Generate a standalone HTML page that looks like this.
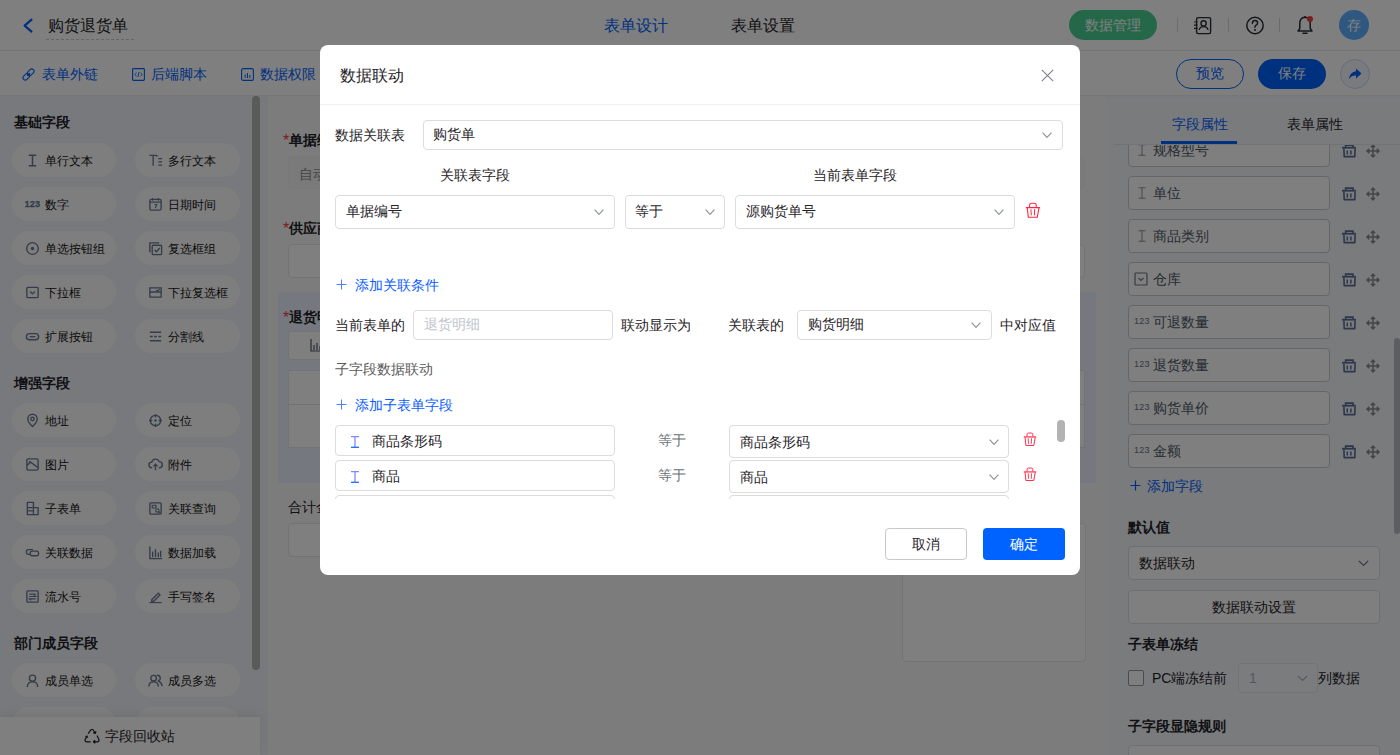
<!DOCTYPE html>
<html><head><meta charset="utf-8">
<style>
*{margin:0;padding:0;box-sizing:border-box}
html,body{width:1400px;height:755px;overflow:hidden;font-family:"Liberation Sans",sans-serif;color:#1f2329;background:#f5f5f5}
.a{position:absolute}
.t{position:absolute;white-space:nowrap;line-height:1}
#hdr{z-index:2;left:0;top:0;width:1400px;height:51px;background:#fff;border-bottom:1px solid #e8e8e8}
#tb{left:0;top:51px;width:1400px;height:44px;background:#fff;box-shadow:0 1px 3px rgba(0,0,0,0.04);z-index:1}
#lp{left:0;top:96px;width:268px;height:659px;background:#f1f3f8}
.sec{font-size:14px;font-weight:bold;color:#1f2329}
.pill{position:absolute;height:34px;border-radius:17px;background:#fcfcfd;font-size:12px;color:#141414}
.pill .ic{position:absolute;top:9.5px;left:12.5px;width:15px;height:15px}
.pill span{position:absolute;left:33px;top:12px;line-height:12px;white-space:nowrap}
#cv{left:268px;top:96px;width:838px;height:659px;background:#f9f9f9}
#rp{left:1106px;top:96px;width:294px;height:659px;background:#f4f6fb}
#mask{z-index:5;left:0;top:0;width:1400px;height:755px;background:rgba(0,0,0,.5)}
#dlg{z-index:6;left:320px;top:45px;width:760px;height:530px;background:#fff;border-radius:8px;overflow:hidden}
.inp{position:absolute;border:1px solid #dcdfe6;border-radius:4px;background:#fff;font-size:14px;color:#1f2329}
.inp span{position:absolute;top:50%;transform:translateY(-50%);line-height:1;white-space:nowrap}
.chev{position:absolute;width:10px;height:6px}
.lbl{font-size:14px;color:#1f2329}
.blue{color:#0062ff}
</style></head><body>
<!-- header -->
<div id="hdr" class="a">
  <svg class="a" style="left:22px;top:17.5px" width="12" height="16" viewBox="0 0 12 16"><path d="M9.5 1.6 L2.6 7.6 L9.5 13.6" fill="none" stroke="#0062ff" stroke-width="2.2" stroke-linecap="round" stroke-linejoin="round"/></svg>
  <div class="t" style="left:48px;top:17.5px;font-size:16px;color:#1f2329">购货退货单</div>
  <div class="a" style="left:46px;top:39px;width:88px;height:0;border-top:1px dashed #c9cdd4"></div>
  <div class="t" style="left:603.5px;top:18px;font-size:16px;color:#0062ff">表单设计</div>
  <div class="t" style="left:730.5px;top:18px;font-size:16px;color:#1f2329">表单设置</div>
  <div class="a" style="left:1069px;top:10px;width:88px;height:30px;border-radius:15px;background:#48d092"></div>
  <div class="t" style="left:1085px;top:18px;font-size:14px;color:#fff">数据管理</div>
  <div class="a" style="left:1177px;top:18px;width:1px;height:14px;background:#d9d9d9"></div>
  <div class="a" style="left:1228px;top:18px;width:1px;height:14px;background:#d9d9d9"></div>
  <div class="a" style="left:1279px;top:18px;width:1px;height:14px;background:#d9d9d9"></div>
  <svg class="a" style="left:1193px;top:16px" width="20" height="19" viewBox="0 0 20 19"><rect x="3.6" y="1.6" width="14" height="16" rx="1.5" fill="none" stroke="#2b2f36" stroke-width="1.4"/><circle cx="10.6" cy="7.4" r="2.6" fill="none" stroke="#2b2f36" stroke-width="1.4"/><path d="M6.2 14 Q6.8 10.6 10.6 10.6 Q14.4 10.6 15 14" fill="none" stroke="#2b2f36" stroke-width="1.4"/><path d="M1 6h3.5M1 9.1h3.5M1 12.3h3.5" stroke="#2b2f36" stroke-width="1.2"/></svg>
  <svg class="a" style="left:1245px;top:16px" width="20" height="19" viewBox="0 0 20 19"><circle cx="10" cy="9.5" r="8.2" fill="none" stroke="#2b2f36" stroke-width="1.5"/><path d="M7.4 7.3 Q7.4 4.6 10 4.6 Q12.6 4.6 12.6 7 Q12.6 8.6 10.8 9.4 Q10 9.8 10 11.2" fill="none" stroke="#2b2f36" stroke-width="1.5" stroke-linecap="round"/><circle cx="10" cy="14" r="1" fill="#2b2f36"/></svg>
  <svg class="a" style="left:1296px;top:15px" width="18" height="20" viewBox="0 0 18 20"><path d="M9 2.2 Q3.8 2.6 3.8 8.5 L3.8 13.5 L2 16 L16 16 L14.2 13.5 L14.2 8.5 Q14.2 2.6 9 2.2Z" fill="none" stroke="#2b2f36" stroke-width="1.5" stroke-linejoin="round"/><path d="M7 18.2h4" stroke="#2b2f36" stroke-width="1.5" stroke-linecap="round"/><path d="M9 1v1.5" stroke="#2b2f36" stroke-width="1.5"/><circle cx="14" cy="4" r="3" fill="#f53f3f"/></svg>
  <div class="a" style="left:1339px;top:10px;width:30px;height:30px;border-radius:15px;background:#5cb0ff"></div>
  <div class="t" style="left:1347px;top:18px;font-size:14px;color:#fff">存</div>
</div>
<div id="tb" class="a">
  <svg class="a" style="left:22px;top:16.5px" width="13" height="13" viewBox="0 0 13 13"><g transform="rotate(-45 6.5 6.5)" fill="none" stroke="#0062ff" stroke-width="1.1"><rect x="-0.3" y="4.2" width="7.4" height="4.6" rx="2.3"/><rect x="5.9" y="4.2" width="7.4" height="4.6" rx="2.3"/><path d="M4.5 6.5h4"/></g></svg>
  <div class="t" style="left:42px;top:16px;font-size:14px;color:#0062ff">表单外链</div>
  <svg class="a" style="left:131.5px;top:16.5px" width="13" height="13" viewBox="0 0 13 13"><rect x="0.6" y="0.6" width="11.8" height="11.8" rx="0.8" fill="none" stroke="#0062ff" stroke-width="1.1"/><path d="M4.6 4.6L2.8 6.5 4.6 8.4M8.4 4.6L10.2 6.5 8.4 8.4M7.1 4L5.9 9" fill="none" stroke="#0062ff" stroke-width="0.9"/></svg>
  <div class="t" style="left:151px;top:16px;font-size:14px;color:#0062ff">后端脚本</div>
  <svg class="a" style="left:240.5px;top:16.5px" width="13" height="13" viewBox="0 0 13 13"><rect x="0.6" y="0.6" width="11.8" height="11.8" rx="1.5" fill="none" stroke="#0062ff" stroke-width="1.1"/><path d="M4.2 6.5v3.5M6.5 5v5M8.8 7v3" stroke="#0062ff" stroke-width="1"/></svg>
  <div class="t" style="left:260px;top:16px;font-size:14px;color:#0062ff">数据权限</div>
  <div class="a" style="left:1176px;top:8px;width:68px;height:30px;border-radius:15px;border:1px solid #0062ff"></div>
  <div class="t" style="left:1196px;top:15px;font-size:14px;color:#0062ff">预览</div>
  <div class="a" style="left:1258px;top:8px;width:68px;height:30px;border-radius:15px;background:#0062ff"></div>
  <div class="t" style="left:1278px;top:15px;font-size:14px;color:#fff">保存</div>
  <div class="a" style="left:1340px;top:8px;width:30px;height:30px;border-radius:15px;border:1px solid #c9d6f5;background:#f4f7ff"></div>
  <svg class="a" style="left:1347px;top:15px" width="16" height="16" viewBox="0 0 16 16"><path d="M9 2.5 L14.5 7.5 L9 12.5 L9 9.6 Q4 9.4 1.8 13.6 Q2.6 5.8 9 5.2Z" fill="#0062ff"/></svg>
</div>

<div id="lp" class="a">
<div class="t sec" style="left:14px;top:19px">基础字段</div>
<div class="pill" style="left:12px;top:47px;width:104px"><svg class="ic" viewBox="0 0 16 16"><path d="M4 2.5h8M4 13.5h8M8 2.5v11" stroke="#6a7993" stroke-width="1.6" fill="none"/></svg><span>单行文本</span></div>
<div class="pill" style="left:135px;top:47px;width:105px"><svg class="ic" viewBox="0 0 16 16"><path d="M1.5 2.5h8M5.5 2.5v11M11 6h4M11 9.5h4M11 13h4" stroke="#6a7993" stroke-width="1.45" fill="none"/><path d="M9.5 2.5v1.5" stroke="#6a7993" stroke-width="1.45"/></svg><span>多行文本</span></div>
<div class="pill" style="left:12px;top:91px;width:104px"><svg class="ic" viewBox="0 0 16 16"><text x="-0.5" y="10.8" font-family="Liberation Sans" font-weight="bold" font-size="9.8" letter-spacing="0.1" stroke="#6a7993" stroke-width="0.3" fill="#6a7993">123</text></svg><span>数字</span></div>
<div class="pill" style="left:135px;top:91px;width:105px"><svg class="ic" viewBox="0 0 16 16"><rect x="2" y="2.5" width="12" height="11.5" rx="1.5" fill="none" stroke="#6a7993" stroke-width="1.45"/><path d="M2 5.5h12M5 1v3M11 1v3M6.8 8h2.6L7.6 12" stroke="#6a7993" stroke-width="1.2" fill="none"/></svg><span>日期时间</span></div>
<div class="pill" style="left:12px;top:135px;width:104px"><svg class="ic" viewBox="0 0 16 16"><circle cx="8" cy="8" r="6.2" fill="none" stroke="#6a7993" stroke-width="1.45"/><circle cx="8" cy="8" r="1.8" fill="#6a7993"/></svg><span>单选按钮组</span></div>
<div class="pill" style="left:135px;top:135px;width:105px"><svg class="ic" viewBox="0 0 16 16"><path d="M2 12V2h10" fill="none" stroke="#6a7993" stroke-width="1.45"/><rect x="4.5" y="4.5" width="10" height="10" rx="1" fill="none" stroke="#6a7993" stroke-width="1.45"/><path d="M7 9.5l2 2 3.5-4" fill="none" stroke="#6a7993" stroke-width="1.45"/></svg><span>复选框组</span></div>
<div class="pill" style="left:12px;top:179px;width:104px"><svg class="ic" viewBox="0 0 16 16"><rect x="2" y="2.5" width="12" height="11" rx="1" fill="none" stroke="#6a7993" stroke-width="1.45"/><path d="M5.5 7l2.5 2.5L10.5 7" fill="none" stroke="#6a7993" stroke-width="1.45"/></svg><span>下拉框</span></div>
<div class="pill" style="left:135px;top:179px;width:105px"><svg class="ic" viewBox="0 0 16 16"><path d="M2 3h12v4.5H2z" fill="none" stroke="#6a7993" stroke-width="1.45"/><path d="M2 7.5v5.5h12V7.5" fill="none" stroke="#6a7993" stroke-width="1.45"/><path d="M8.6 5.2l1.6 1.4 2.4-2.4" fill="none" stroke="#6a7993" stroke-width="1.2"/></svg><span>下拉复选框</span></div>
<div class="pill" style="left:12px;top:223px;width:104px"><svg class="ic" viewBox="0 0 16 16"><rect x="1.5" y="5" width="13" height="6.5" rx="3.25" fill="none" stroke="#6a7993" stroke-width="1.45"/><path d="M5 8.25h6" stroke="#6a7993" stroke-width="1.45"/></svg><span>扩展按钮</span></div>
<div class="pill" style="left:135px;top:223px;width:105px"><svg class="ic" viewBox="0 0 16 16"><path d="M2 3.5h12M2 12.5h12M2 8h3M6.5 8h3M11 8h3" stroke="#6a7993" stroke-width="1.45"/></svg><span>分割线</span></div>
<div class="t sec" style="left:14px;top:280px">增强字段</div>
<div class="pill" style="left:12px;top:307px;width:104px"><svg class="ic" viewBox="0 0 16 16"><path d="M8 14.5C4.5 11 3 8.5 3 6.3A5 5 0 0 1 13 6.3C13 8.5 11.5 11 8 14.5Z" fill="none" stroke="#6a7993" stroke-width="1.45"/><circle cx="8" cy="6.3" r="1.8" fill="none" stroke="#6a7993" stroke-width="1.45"/></svg><span>地址</span></div>
<div class="pill" style="left:135px;top:307px;width:105px"><svg class="ic" viewBox="0 0 16 16"><circle cx="8" cy="8" r="5.5" fill="none" stroke="#6a7993" stroke-width="1.45"/><circle cx="8" cy="8" r="1.3" fill="#6a7993"/><path d="M8 1v3.5M8 11.5V15M1 8h3.5M11.5 8H15" stroke="#6a7993" stroke-width="1.45"/></svg><span>定位</span></div>
<div class="pill" style="left:12px;top:351px;width:104px"><svg class="ic" viewBox="0 0 16 16"><rect x="2" y="2" width="12" height="12" rx="1.5" fill="none" stroke="#6a7993" stroke-width="1.45"/><path d="M2 9l4-3.5 8 6" fill="none" stroke="#6a7993" stroke-width="1.45"/><path d="M4 5h2" stroke="#6a7993" stroke-width="1.2"/></svg><span>图片</span></div>
<div class="pill" style="left:135px;top:351px;width:105px"><svg class="ic" viewBox="0 0 16 16"><path d="M4.5 11.5H4A3 3 0 0 1 4 5.5 4.2 4.2 0 0 1 12 5 3.2 3.2 0 0 1 12 11.5h-.5" fill="none" stroke="#6a7993" stroke-width="1.45"/><path d="M8 14V8M5.8 10L8 7.8 10.2 10" fill="none" stroke="#6a7993" stroke-width="1.45"/></svg><span>附件</span></div>
<div class="pill" style="left:12px;top:395px;width:104px"><svg class="ic" viewBox="0 0 16 16"><path d="M2.5 14.5V1.5H9V7H14V14.5Z" fill="none" stroke="#6a7993" stroke-width="1.45" stroke-linejoin="round"/><path d="M2.5 7H9V14.5M2.5 10.5H9" fill="none" stroke="#6a7993" stroke-width="1.3"/></svg><span>子表单</span></div>
<div class="pill" style="left:135px;top:395px;width:105px"><svg class="ic" viewBox="0 0 16 16"><rect x="2" y="2" width="12" height="12" rx="1" fill="none" stroke="#6a7993" stroke-width="1.45"/><path d="M4.5 4.5h4v3h-4z" fill="none" stroke="#6a7993" stroke-width="1.2"/><circle cx="10" cy="10" r="1.8" fill="none" stroke="#6a7993" stroke-width="1.2"/><path d="M11.3 11.3l1.5 1.5" stroke="#6a7993" stroke-width="1.2"/></svg><span>关联查询</span></div>
<div class="pill" style="left:12px;top:439px;width:104px"><svg class="ic" viewBox="0 0 16 16"><path d="M8.5 5H3.5Q1.5 5 1.5 7.5Q1.5 10 3.5 10H6" fill="none" stroke="#6a7993" stroke-width="1.45"/><path d="M7.5 6.5H12.5Q14.5 6.5 14.5 9Q14.5 11.5 12.5 11.5H7.5Q5.5 11.5 5.5 9Q5.5 6.5 7.5 6.5Z" fill="none" stroke="#6a7993" stroke-width="1.45"/></svg><span>关联数据</span></div>
<div class="pill" style="left:135px;top:439px;width:105px"><svg class="ic" viewBox="0 0 16 16"><path d="M2 1.5v13h13" fill="none" stroke="#6a7993" stroke-width="1.45"/><path d="M5 7v6M8 4.5v8.5M11 8v5M13.5 6v7" stroke="#6a7993" stroke-width="1.45"/></svg><span>数据加载</span></div>
<div class="pill" style="left:12px;top:483px;width:104px"><svg class="ic" viewBox="0 0 16 16"><rect x="2" y="2" width="12" height="12" rx="1" fill="none" stroke="#6a7993" stroke-width="1.45"/><path d="M4.5 5.5h7M4.5 8h7l-2-1.5M11.5 10.5h-7l2 1.5" fill="none" stroke="#6a7993" stroke-width="1.2"/></svg><span>流水号</span></div>
<div class="pill" style="left:135px;top:483px;width:105px"><svg class="ic" viewBox="0 0 16 16"><path d="M4 11.5L11 4.5 12.8 6.3 5.8 13.3H4z" fill="none" stroke="#6a7993" stroke-width="1.45"/><path d="M1.5 14.5h13" stroke="#6a7993" stroke-width="1.2"/></svg><span>手写签名</span></div>
<div class="t sec" style="left:14px;top:540px">部门成员字段</div>
<div class="pill" style="left:12px;top:567px;width:104px"><svg class="ic" viewBox="0 0 16 16"><circle cx="8" cy="5.5" r="3.3" fill="none" stroke="#6a7993" stroke-width="1.45"/><path d="M2.5 15Q2.5 9.5 8 9.5T13.5 15" fill="none" stroke="#6a7993" stroke-width="1.45"/></svg><span>成员单选</span></div>
<div class="pill" style="left:135px;top:567px;width:105px"><svg class="ic" viewBox="0 0 16 16"><circle cx="6" cy="5.5" r="3" fill="none" stroke="#6a7993" stroke-width="1.45"/><path d="M1 14.5Q1 9.5 6 9.5T11 14.5" fill="none" stroke="#6a7993" stroke-width="1.45"/><path d="M9.5 2.5A3 3 0 0 1 10.5 8.5Q14.5 9.5 15 14" fill="none" stroke="#6a7993" stroke-width="1.45"/></svg><span>成员多选</span></div>
<div class="pill" style="left:12px;top:611px;width:104px"></div>
<div class="pill" style="left:135px;top:611px;width:105px"></div>
<div class="a" style="left:252px;top:0px;width:8px;height:574px;border-radius:4px;background:#b4b4b4"></div>
<div class="a" style="left:0;top:621px;width:260px;height:38px;background:#fff;box-shadow:0 -3px 10px rgba(0,0,0,0.08)"></div>
<svg class="a" style="left:84px;top:633px" width="16" height="15" viewBox="0 0 16 15"><path d="M4.2 4.6L6.6 1.2Q8 -0.2 9.4 1.2L11.2 4M9.2 3.6L11.4 4.4 12 2.2" fill="none" stroke="#1f2329" stroke-width="1.2" stroke-linejoin="round"/><path d="M13 6.6L14.9 10.4Q15.6 12.6 13.2 12.8L9.6 12.8M11.2 11.2L9.4 12.8 11.2 14.4" fill="none" stroke="#1f2329" stroke-width="1.2" stroke-linejoin="round"/><path d="M6.6 12.8L3 12.8Q0.6 12.6 1.1 10.4L3 7.2M1.4 7.8L3 7 3.6 8.8" fill="none" stroke="#1f2329" stroke-width="1.2" stroke-linejoin="round"/></svg>
<div class="t" style="left:105px;top:633px;font-size:14px;color:#1f2329">字段回收站</div>
</div>
<div id="cv" class="a">
<div class="t" style="left:15px;top:37px;font-size:14px;font-weight:600;color:#1f2329"><span style="color:#f53f3f;font-weight:normal;font-size:16px;vertical-align:-1px">*</span>单据编号</div>
<div class="a" style="left:20px;top:60px;width:797px;height:33px;border:1px solid #f0f0f0;border-radius:4px;background:#f5f5f5"></div>
<div class="t" style="left:31px;top:71px;font-size:14px;color:#8c8c8c">自动生成</div>
<div class="t" style="left:15px;top:125px;font-size:14px;font-weight:600;color:#1f2329"><span style="color:#f53f3f;font-weight:normal;font-size:16px;vertical-align:-1px">*</span>供应商</div>
<div class="a" style="left:20px;top:148px;width:797px;height:34px;border:1px solid #e5e6eb;border-radius:4px;background:#fff"></div>
<div class="a" style="left:10px;top:196px;width:818px;height:191px;background:#eaf0fd"></div>
<div class="t" style="left:15px;top:214px;font-size:14px;font-weight:600;color:#1f2329"><span style="color:#f53f3f;font-weight:normal;font-size:16px;vertical-align:-1px">*</span>退货明细</div>
<div class="a" style="left:20px;top:235px;width:120px;height:29px;border:1px solid #e5e6eb;border-radius:4px;background:#fff"></div>
<svg class="a" style="left:42px;top:242px" width="14" height="14" viewBox="0 0 14 14"><path d="M1 1v12h12" fill="none" stroke="#4e5969" stroke-width="1.2"/><path d="M4 7v5M7 5v7M10 8v4" stroke="#4e5969" stroke-width="1.2"/></svg>
<div class="a" style="left:20px;top:274px;width:797px;height:78px;border:1px solid #e5e6eb;background:#fff"></div>
<div class="a" style="left:20px;top:308px;width:797px;height:1px;background:#e5e6eb"></div>
<div class="t" style="left:20px;top:404px;font-size:14px;font-weight:normal;color:#1f2329">合计金额</div>
<div class="a" style="left:20px;top:427px;width:400px;height:34px;border:1px solid #e5e6eb;border-radius:4px;background:#fff"></div>
<div class="a" style="left:634px;top:427px;width:184px;height:139px;border:1px solid #e5e6eb;border-radius:4px;background:#fff"></div>

</div>
<div id="rp" class="a">
<div class="t" style="left:66px;top:21px;font-size:14px;color:#0062ff">字段属性</div>
<div class="t" style="left:181px;top:21px;font-size:14px;color:#1f2329">表单属性</div>
<div class="a" style="left:0;top:49px;width:294px;height:400px;overflow:hidden">
<div class="a" style="left:22px;top:-12px;width:202px;height:34px;border:1px solid #cdcdcd;border-radius:4px;background:#fff"></div>
<svg class="a" style="left:32px;top:-1px" width="8" height="12" viewBox="0 0 8 12"><path d="M0.5 0.8h7M0.5 11.2h7M4 0.8v10.4" stroke="#8a8f99" stroke-width="1"/></svg>
<div class="t" style="left:47px;top:-2px;font-size:14px;color:#4e5969">规格型号</div>
<svg class="a" style="left:235px;top:-2px" width="16" height="16" viewBox="0 0 16 16"><path d="M4.6 4.8V2.1H12V4.8" fill="none" stroke="#5a6d94" stroke-width="1.6"/><path d="M1 4.7H14.9" stroke="#5a6d94" stroke-width="1.8"/><path d="M2.9 5.5L3.2 13.6H13.8L14.1 5.5" fill="none" stroke="#5a6d94" stroke-width="1.6" stroke-linejoin="round"/><path d="M6.3 7.4V11.4M9.9 7.4V11.4" stroke="#5a6d94" stroke-width="1.5"/></svg>
<svg class="a" style="left:260px;top:-1.5px" width="14" height="14" viewBox="0 0 14 14"><path d="M7 1v12M1 7h12" stroke="#8a8a8a" stroke-width="1.5"/><path d="M4.8 3.2L7 0.8 9.2 3.2M4.8 10.8L7 13.2 9.2 10.8M3.2 4.8L0.8 7 3.2 9.2M10.8 4.8L13.2 7 10.8 9.2" fill="#8a8a8a" stroke="#8a8a8a" stroke-width="1.2" stroke-linejoin="round"/></svg>
<div class="a" style="left:22px;top:31px;width:202px;height:34px;border:1px solid #cdcdcd;border-radius:4px;background:#fff"></div>
<svg class="a" style="left:32px;top:42px" width="8" height="12" viewBox="0 0 8 12"><path d="M0.5 0.8h7M0.5 11.2h7M4 0.8v10.4" stroke="#8a8f99" stroke-width="1"/></svg>
<div class="t" style="left:47px;top:41px;font-size:14px;color:#4e5969">单位</div>
<svg class="a" style="left:235px;top:41px" width="16" height="16" viewBox="0 0 16 16"><path d="M4.6 4.8V2.1H12V4.8" fill="none" stroke="#5a6d94" stroke-width="1.6"/><path d="M1 4.7H14.9" stroke="#5a6d94" stroke-width="1.8"/><path d="M2.9 5.5L3.2 13.6H13.8L14.1 5.5" fill="none" stroke="#5a6d94" stroke-width="1.6" stroke-linejoin="round"/><path d="M6.3 7.4V11.4M9.9 7.4V11.4" stroke="#5a6d94" stroke-width="1.5"/></svg>
<svg class="a" style="left:260px;top:41.5px" width="14" height="14" viewBox="0 0 14 14"><path d="M7 1v12M1 7h12" stroke="#8a8a8a" stroke-width="1.5"/><path d="M4.8 3.2L7 0.8 9.2 3.2M4.8 10.8L7 13.2 9.2 10.8M3.2 4.8L0.8 7 3.2 9.2M10.8 4.8L13.2 7 10.8 9.2" fill="#8a8a8a" stroke="#8a8a8a" stroke-width="1.2" stroke-linejoin="round"/></svg>
<div class="a" style="left:22px;top:74px;width:202px;height:34px;border:1px solid #cdcdcd;border-radius:4px;background:#fff"></div>
<svg class="a" style="left:32px;top:85px" width="8" height="12" viewBox="0 0 8 12"><path d="M0.5 0.8h7M0.5 11.2h7M4 0.8v10.4" stroke="#8a8f99" stroke-width="1"/></svg>
<div class="t" style="left:47px;top:84px;font-size:14px;color:#4e5969">商品类别</div>
<svg class="a" style="left:235px;top:84px" width="16" height="16" viewBox="0 0 16 16"><path d="M4.6 4.8V2.1H12V4.8" fill="none" stroke="#5a6d94" stroke-width="1.6"/><path d="M1 4.7H14.9" stroke="#5a6d94" stroke-width="1.8"/><path d="M2.9 5.5L3.2 13.6H13.8L14.1 5.5" fill="none" stroke="#5a6d94" stroke-width="1.6" stroke-linejoin="round"/><path d="M6.3 7.4V11.4M9.9 7.4V11.4" stroke="#5a6d94" stroke-width="1.5"/></svg>
<svg class="a" style="left:260px;top:84.5px" width="14" height="14" viewBox="0 0 14 14"><path d="M7 1v12M1 7h12" stroke="#8a8a8a" stroke-width="1.5"/><path d="M4.8 3.2L7 0.8 9.2 3.2M4.8 10.8L7 13.2 9.2 10.8M3.2 4.8L0.8 7 3.2 9.2M10.8 4.8L13.2 7 10.8 9.2" fill="#8a8a8a" stroke="#8a8a8a" stroke-width="1.2" stroke-linejoin="round"/></svg>
<div class="a" style="left:22px;top:117px;width:202px;height:34px;border:1px solid #cdcdcd;border-radius:4px;background:#fff"></div>
<svg class="a" style="left:28px;top:127px" width="14" height="14" viewBox="0 0 14 14"><rect x="1" y="1" width="12" height="12" rx="1" fill="none" stroke="#6b7280" stroke-width="1.2"/><path d="M4.5 6l2.5 2.5L9.5 6" fill="none" stroke="#6b7280" stroke-width="1.1"/></svg>
<div class="t" style="left:47px;top:127px;font-size:14px;color:#4e5969">仓库</div>
<svg class="a" style="left:235px;top:127px" width="16" height="16" viewBox="0 0 16 16"><path d="M4.6 4.8V2.1H12V4.8" fill="none" stroke="#5a6d94" stroke-width="1.6"/><path d="M1 4.7H14.9" stroke="#5a6d94" stroke-width="1.8"/><path d="M2.9 5.5L3.2 13.6H13.8L14.1 5.5" fill="none" stroke="#5a6d94" stroke-width="1.6" stroke-linejoin="round"/><path d="M6.3 7.4V11.4M9.9 7.4V11.4" stroke="#5a6d94" stroke-width="1.5"/></svg>
<svg class="a" style="left:260px;top:127.5px" width="14" height="14" viewBox="0 0 14 14"><path d="M7 1v12M1 7h12" stroke="#8a8a8a" stroke-width="1.5"/><path d="M4.8 3.2L7 0.8 9.2 3.2M4.8 10.8L7 13.2 9.2 10.8M3.2 4.8L0.8 7 3.2 9.2M10.8 4.8L13.2 7 10.8 9.2" fill="#8a8a8a" stroke="#8a8a8a" stroke-width="1.2" stroke-linejoin="round"/></svg>
<div class="a" style="left:22px;top:160px;width:202px;height:34px;border:1px solid #cdcdcd;border-radius:4px;background:#fff"></div>
<div class="t" style="left:28px;top:172px;font-size:9px;color:#6b7280;letter-spacing:0.3px">123</div>
<div class="t" style="left:47px;top:170px;font-size:14px;color:#4e5969">可退数量</div>
<svg class="a" style="left:235px;top:170px" width="16" height="16" viewBox="0 0 16 16"><path d="M4.6 4.8V2.1H12V4.8" fill="none" stroke="#5a6d94" stroke-width="1.6"/><path d="M1 4.7H14.9" stroke="#5a6d94" stroke-width="1.8"/><path d="M2.9 5.5L3.2 13.6H13.8L14.1 5.5" fill="none" stroke="#5a6d94" stroke-width="1.6" stroke-linejoin="round"/><path d="M6.3 7.4V11.4M9.9 7.4V11.4" stroke="#5a6d94" stroke-width="1.5"/></svg>
<svg class="a" style="left:260px;top:170.5px" width="14" height="14" viewBox="0 0 14 14"><path d="M7 1v12M1 7h12" stroke="#8a8a8a" stroke-width="1.5"/><path d="M4.8 3.2L7 0.8 9.2 3.2M4.8 10.8L7 13.2 9.2 10.8M3.2 4.8L0.8 7 3.2 9.2M10.8 4.8L13.2 7 10.8 9.2" fill="#8a8a8a" stroke="#8a8a8a" stroke-width="1.2" stroke-linejoin="round"/></svg>
<div class="a" style="left:22px;top:203px;width:202px;height:34px;border:1px solid #cdcdcd;border-radius:4px;background:#fff"></div>
<div class="t" style="left:28px;top:215px;font-size:9px;color:#6b7280;letter-spacing:0.3px">123</div>
<div class="t" style="left:47px;top:213px;font-size:14px;color:#4e5969">退货数量</div>
<svg class="a" style="left:235px;top:213px" width="16" height="16" viewBox="0 0 16 16"><path d="M4.6 4.8V2.1H12V4.8" fill="none" stroke="#5a6d94" stroke-width="1.6"/><path d="M1 4.7H14.9" stroke="#5a6d94" stroke-width="1.8"/><path d="M2.9 5.5L3.2 13.6H13.8L14.1 5.5" fill="none" stroke="#5a6d94" stroke-width="1.6" stroke-linejoin="round"/><path d="M6.3 7.4V11.4M9.9 7.4V11.4" stroke="#5a6d94" stroke-width="1.5"/></svg>
<svg class="a" style="left:260px;top:213.5px" width="14" height="14" viewBox="0 0 14 14"><path d="M7 1v12M1 7h12" stroke="#8a8a8a" stroke-width="1.5"/><path d="M4.8 3.2L7 0.8 9.2 3.2M4.8 10.8L7 13.2 9.2 10.8M3.2 4.8L0.8 7 3.2 9.2M10.8 4.8L13.2 7 10.8 9.2" fill="#8a8a8a" stroke="#8a8a8a" stroke-width="1.2" stroke-linejoin="round"/></svg>
<div class="a" style="left:22px;top:246px;width:202px;height:34px;border:1px solid #cdcdcd;border-radius:4px;background:#fff"></div>
<div class="t" style="left:28px;top:258px;font-size:9px;color:#6b7280;letter-spacing:0.3px">123</div>
<div class="t" style="left:47px;top:256px;font-size:14px;color:#4e5969">购货单价</div>
<svg class="a" style="left:235px;top:256px" width="16" height="16" viewBox="0 0 16 16"><path d="M4.6 4.8V2.1H12V4.8" fill="none" stroke="#5a6d94" stroke-width="1.6"/><path d="M1 4.7H14.9" stroke="#5a6d94" stroke-width="1.8"/><path d="M2.9 5.5L3.2 13.6H13.8L14.1 5.5" fill="none" stroke="#5a6d94" stroke-width="1.6" stroke-linejoin="round"/><path d="M6.3 7.4V11.4M9.9 7.4V11.4" stroke="#5a6d94" stroke-width="1.5"/></svg>
<svg class="a" style="left:260px;top:256.5px" width="14" height="14" viewBox="0 0 14 14"><path d="M7 1v12M1 7h12" stroke="#8a8a8a" stroke-width="1.5"/><path d="M4.8 3.2L7 0.8 9.2 3.2M4.8 10.8L7 13.2 9.2 10.8M3.2 4.8L0.8 7 3.2 9.2M10.8 4.8L13.2 7 10.8 9.2" fill="#8a8a8a" stroke="#8a8a8a" stroke-width="1.2" stroke-linejoin="round"/></svg>
<div class="a" style="left:22px;top:289px;width:202px;height:34px;border:1px solid #cdcdcd;border-radius:4px;background:#fff"></div>
<div class="t" style="left:28px;top:301px;font-size:9px;color:#6b7280;letter-spacing:0.3px">123</div>
<div class="t" style="left:47px;top:299px;font-size:14px;color:#4e5969">金额</div>
<svg class="a" style="left:235px;top:299px" width="16" height="16" viewBox="0 0 16 16"><path d="M4.6 4.8V2.1H12V4.8" fill="none" stroke="#5a6d94" stroke-width="1.6"/><path d="M1 4.7H14.9" stroke="#5a6d94" stroke-width="1.8"/><path d="M2.9 5.5L3.2 13.6H13.8L14.1 5.5" fill="none" stroke="#5a6d94" stroke-width="1.6" stroke-linejoin="round"/><path d="M6.3 7.4V11.4M9.9 7.4V11.4" stroke="#5a6d94" stroke-width="1.5"/></svg>
<svg class="a" style="left:260px;top:299.5px" width="14" height="14" viewBox="0 0 14 14"><path d="M7 1v12M1 7h12" stroke="#8a8a8a" stroke-width="1.5"/><path d="M4.8 3.2L7 0.8 9.2 3.2M4.8 10.8L7 13.2 9.2 10.8M3.2 4.8L0.8 7 3.2 9.2M10.8 4.8L13.2 7 10.8 9.2" fill="#8a8a8a" stroke="#8a8a8a" stroke-width="1.2" stroke-linejoin="round"/></svg>
</div>
<div class="a" style="left:8px;top:48px;width:286px;height:1px;background:#e5e6eb"></div>
<div class="a" style="left:55px;top:45px;width:76px;height:3px;background:#0062ff"></div>
<svg class="a" style="left:24px;top:384px" width="11" height="11" viewBox="0 0 11 11"><path d="M5.5 0.5v10M0.5 5.5h10" stroke="#0062ff" stroke-width="1.2"/></svg>
<div class="t" style="left:41px;top:383px;font-size:14px;color:#0062ff">添加字段</div>
<div class="t" style="left:22px;top:424px;font-size:14px;font-weight:bold;color:#1f2329">默认值</div>
<div class="a" style="left:22px;top:450px;width:252px;height:34px;border:1px solid #dcdfe6;border-radius:4px;background:#fff"></div>
<div class="t" style="left:33px;top:460px;font-size:14px;color:#1f2329">数据联动</div>
<svg class="a" style="left:252px;top:464px" width="11" height="7" viewBox="0 0 11 7"><path d="M0.8 0.8L5.5 5.5 10.2 0.8" fill="none" stroke="#6b7280" stroke-width="1.2"/></svg>
<div class="a" style="left:22px;top:494px;width:252px;height:34px;border:1px solid #dcdfe6;border-radius:4px;background:#fff"></div>
<div class="t" style="left:106px;top:504px;font-size:14px;color:#1f2329">数据联动设置</div>
<div class="t" style="left:22px;top:541px;font-size:14px;font-weight:bold;color:#1f2329">子表单冻结</div>
<div class="a" style="left:22px;top:574px;width:16px;height:16px;border:1px solid #999;border-radius:2px;background:#fff"></div>
<div class="t" style="left:46px;top:575px;font-size:14px;color:#1f2329">PC端冻结前</div>
<div class="a" style="left:132px;top:567px;width:80px;height:30px;border:1px solid #e5e6eb;border-radius:4px;background:#f7f8fa"></div>
<div class="t" style="left:143px;top:575px;font-size:14px;color:#a9aeb8">1</div>
<svg class="a" style="left:191px;top:579px" width="11" height="7" viewBox="0 0 11 7"><path d="M0.8 0.8L5.5 5.5 10.2 0.8" fill="none" stroke="#a9aeb8" stroke-width="1.2"/></svg>
<div class="t" style="left:212px;top:575px;font-size:14px;color:#1f2329">列数据</div>
<div class="t" style="left:22px;top:623px;font-size:14px;font-weight:bold;color:#1f2329">子字段显隐规则</div>
<div class="a" style="left:22px;top:649px;width:252px;height:34px;border:1px solid #dcdfe6;border-radius:4px;background:#fff"></div>
<div class="a" style="left:288px;top:242px;width:6px;height:196px;border-radius:3px;background:#b8bbc2"></div>
</div>
<div id="mask" class="a"></div>
<div id="dlg" class="a">
<div class="t" style="left:20px;top:23px;font-size:16px;color:#1f2329;">数据联动</div>
<div class="a" style="left:0;top:59px;width:760px;height:1px;background:#efefef"></div>
<svg class="a" style="left:721px;top:23.5px" width="13" height="13" viewBox="0 0 13 13"><path d="M0.8 0.8L12.2 12.2M12.2 0.8L0.8 12.2" stroke="#7d7f85" stroke-width="1.1"/></svg>
<div class="t" style="left:15px;top:83px;font-size:14px;color:#1f2329;">数据关联表</div>
<div class="a" style="left:103px;top:75px;width:640px;height:30px;border:1px solid #dcdcdc;border-radius:4px;background:#fff;"></div>
<div class="t" style="left:113px;top:82px;font-size:14px;color:#1f2329;">购货单</div>
<svg class="a" style="left:722px;top:87px" width="10" height="6" viewBox="0 0 10 6"><path d="M0.6 0.6L5.0 5.4 9.4 0.6" fill="none" stroke="#8a8f99" stroke-width="1.1"/></svg>
<div class="t" style="left:120px;top:123px;font-size:14px;color:#1f2329;">关联表字段</div>
<div class="t" style="left:493px;top:123px;font-size:14px;color:#1f2329;">当前表单字段</div>
<div class="a" style="left:15px;top:150px;width:280px;height:34px;border:1px solid #dcdcdc;border-radius:4px;background:#fff;"></div>
<div class="t" style="left:26px;top:159px;font-size:14px;color:#1f2329;">单据编号</div>
<svg class="a" style="left:274px;top:164px" width="10" height="6" viewBox="0 0 10 6"><path d="M0.6 0.6L5.0 5.4 9.4 0.6" fill="none" stroke="#8a8f99" stroke-width="1.1"/></svg>
<div class="a" style="left:305px;top:150px;width:100px;height:34px;border:1px solid #dcdcdc;border-radius:4px;background:#fff;"></div>
<div class="t" style="left:315px;top:159px;font-size:14px;color:#1f2329;">等于</div>
<svg class="a" style="left:385px;top:164px" width="10" height="6" viewBox="0 0 10 6"><path d="M0.6 0.6L5.0 5.4 9.4 0.6" fill="none" stroke="#8a8f99" stroke-width="1.1"/></svg>
<div class="a" style="left:415px;top:150px;width:280px;height:34px;border:1px solid #dcdcdc;border-radius:4px;background:#fff;"></div>
<div class="t" style="left:426px;top:159px;font-size:14px;color:#1f2329;">源购货单号</div>
<svg class="a" style="left:674px;top:164px" width="10" height="6" viewBox="0 0 10 6"><path d="M0.6 0.6L5.0 5.4 9.4 0.6" fill="none" stroke="#8a8f99" stroke-width="1.1"/></svg>
<svg class="a" style="left:705px;top:157px" width="16.0" height="17.0" viewBox="0 0 16 17"><path d="M4.6 5V3Q4.6 1.2 6.4 1.2H9.4Q11.2 1.2 11.2 3V5" fill="none" stroke="#ff2442" stroke-width="1.1"/><path d="M0.9 5.6H15" stroke="#ff2442" stroke-width="1.3"/><path d="M2.3 6L3.3 15.3H12.3L13.9 6" fill="none" stroke="#ff2442" stroke-width="1.1"/><path d="M5.9 7.2L6.3 13.4M9.7 7.2L9.4 13.4" stroke="#ff2442" stroke-width="1"/></svg>
<svg class="a" style="left:16px;top:234px" width="11" height="11" viewBox="0 0 11 11"><path d="M5.5 0.5v10M0.5 5.5h10" stroke="#4d7fff" stroke-width="1"/></svg>
<div class="t" style="left:35px;top:233px;font-size:14px;color:#0a5cff;">添加关联条件</div>
<div class="t" style="left:15px;top:273px;font-size:14px;color:#1f2329;">当前表单的</div>
<div class="a" style="left:93px;top:265px;width:200px;height:30px;border:1px solid #dcdcdc;border-radius:4px;background:#fff;"></div>
<div class="t" style="left:104px;top:272px;font-size:14px;color:#c0c4cc;">退货明细</div>
<div class="t" style="left:301px;top:273px;font-size:14px;color:#1f2329;">联动显示为</div>
<div class="t" style="left:408px;top:273px;font-size:14px;color:#1f2329;">关联表的</div>
<div class="a" style="left:477px;top:265px;width:195px;height:30px;border:1px solid #dcdcdc;border-radius:4px;background:#fff;"></div>
<div class="t" style="left:488px;top:272px;font-size:14px;color:#1f2329;">购货明细</div>
<svg class="a" style="left:651px;top:277px" width="10" height="6" viewBox="0 0 10 6"><path d="M0.6 0.6L5.0 5.4 9.4 0.6" fill="none" stroke="#8a8f99" stroke-width="1.1"/></svg>
<div class="t" style="left:680px;top:273px;font-size:14px;color:#1f2329;">中对应值</div>
<div class="t" style="left:15px;top:317px;font-size:14px;color:#5a5a5a;">子字段数据联动</div>
<svg class="a" style="left:16px;top:354px" width="11" height="11" viewBox="0 0 11 11"><path d="M5.5 0.5v10M0.5 5.5h10" stroke="#4d7fff" stroke-width="1"/></svg>
<div class="t" style="left:35px;top:353px;font-size:14px;color:#0a5cff;">添加子表单字段</div>
<div class="a" style="left:0;top:375px;width:760px;height:79px;overflow:hidden">
<div class="a" style="left:15px;top:5px;width:280px;height:31px;border:1px solid #dcdcdc;border-radius:4px;background:#fff;"></div>
<svg class="a" style="left:30px;top:15.5px" width="10" height="12" viewBox="0 0 10 12"><path d="M1 0.7h8M5 0.7v10.6" stroke="#7a8cff" stroke-width="1.3"/><path d="M1 11.3h8" stroke="#1a6dff" stroke-width="1.3"/></svg>
<div class="t" style="left:52px;top:13.5px;font-size:14px;color:#1f2329;">商品条形码</div>
<div class="t" style="left:338px;top:12.5px;font-size:14px;color:#6b6f76;">等于</div>
<div class="a" style="left:409px;top:5px;width:280px;height:33px;border:1px solid #dcdcdc;border-radius:4px;background:#fff;"></div>
<div class="t" style="left:420px;top:14.5px;font-size:14px;color:#1f2329;">商品条形码</div>
<svg class="a" style="left:668.6px;top:18.5px" width="10" height="6" viewBox="0 0 10 6"><path d="M0.6 0.6L5.0 5.4 9.4 0.6" fill="none" stroke="#8a8f99" stroke-width="1.1"/></svg>
<svg class="a" style="left:703.1px;top:11.8px" width="14.08" height="14.96" viewBox="0 0 16 17"><path d="M4.6 5V3Q4.6 1.2 6.4 1.2H9.4Q11.2 1.2 11.2 3V5" fill="none" stroke="#ff2442" stroke-width="1.1"/><path d="M0.9 5.6H15" stroke="#ff2442" stroke-width="1.3"/><path d="M2.3 6L3.3 15.3H12.3L13.9 6" fill="none" stroke="#ff2442" stroke-width="1.1"/><path d="M5.9 7.2L6.3 13.4M9.7 7.2L9.4 13.4" stroke="#ff2442" stroke-width="1"/></svg>
<div class="a" style="left:15px;top:40px;width:280px;height:31px;border:1px solid #dcdcdc;border-radius:4px;background:#fff;"></div>
<svg class="a" style="left:30px;top:50.5px" width="10" height="12" viewBox="0 0 10 12"><path d="M1 0.7h8M5 0.7v10.6" stroke="#7a8cff" stroke-width="1.3"/><path d="M1 11.3h8" stroke="#1a6dff" stroke-width="1.3"/></svg>
<div class="t" style="left:52px;top:48.5px;font-size:14px;color:#1f2329;">商品</div>
<div class="t" style="left:338px;top:47.5px;font-size:14px;color:#6b6f76;">等于</div>
<div class="a" style="left:409px;top:40px;width:280px;height:33px;border:1px solid #dcdcdc;border-radius:4px;background:#fff;"></div>
<div class="t" style="left:420px;top:49.5px;font-size:14px;color:#1f2329;">商品</div>
<svg class="a" style="left:668.6px;top:53.5px" width="10" height="6" viewBox="0 0 10 6"><path d="M0.6 0.6L5.0 5.4 9.4 0.6" fill="none" stroke="#8a8f99" stroke-width="1.1"/></svg>
<svg class="a" style="left:703.1px;top:46.8px" width="14.08" height="14.96" viewBox="0 0 16 17"><path d="M4.6 5V3Q4.6 1.2 6.4 1.2H9.4Q11.2 1.2 11.2 3V5" fill="none" stroke="#ff2442" stroke-width="1.1"/><path d="M0.9 5.6H15" stroke="#ff2442" stroke-width="1.3"/><path d="M2.3 6L3.3 15.3H12.3L13.9 6" fill="none" stroke="#ff2442" stroke-width="1.1"/><path d="M5.9 7.2L6.3 13.4M9.7 7.2L9.4 13.4" stroke="#ff2442" stroke-width="1"/></svg>
<div class="a" style="left:15px;top:75px;width:280px;height:31px;border:1px solid #dcdcdc;border-radius:4px;background:#fff;"></div>
<svg class="a" style="left:30px;top:85.5px" width="10" height="12" viewBox="0 0 10 12"><path d="M1 0.7h8M5 0.7v10.6" stroke="#7a8cff" stroke-width="1.3"/><path d="M1 11.3h8" stroke="#1a6dff" stroke-width="1.3"/></svg>
<div class="t" style="left:52px;top:83.5px;font-size:14px;color:#1f2329;">商品单位</div>
<div class="t" style="left:338px;top:82.5px;font-size:14px;color:#6b6f76;">等于</div>
<div class="a" style="left:409px;top:75px;width:280px;height:33px;border:1px solid #dcdcdc;border-radius:4px;background:#fff;"></div>
<div class="t" style="left:420px;top:84.5px;font-size:14px;color:#1f2329;">商品单位</div>
<svg class="a" style="left:668.6px;top:88.5px" width="10" height="6" viewBox="0 0 10 6"><path d="M0.6 0.6L5.0 5.4 9.4 0.6" fill="none" stroke="#8a8f99" stroke-width="1.1"/></svg>
<svg class="a" style="left:703.1px;top:81.8px" width="14.08" height="14.96" viewBox="0 0 16 17"><path d="M4.6 5V3Q4.6 1.2 6.4 1.2H9.4Q11.2 1.2 11.2 3V5" fill="none" stroke="#ff2442" stroke-width="1.1"/><path d="M0.9 5.6H15" stroke="#ff2442" stroke-width="1.3"/><path d="M2.3 6L3.3 15.3H12.3L13.9 6" fill="none" stroke="#ff2442" stroke-width="1.1"/><path d="M5.9 7.2L6.3 13.4M9.7 7.2L9.4 13.4" stroke="#ff2442" stroke-width="1"/></svg>
</div>
<div class="a" style="left:737px;top:375px;width:8px;height:22px;border-radius:4px;background:#b3b3b3"></div>
<div class="a" style="left:565px;top:483px;width:82px;height:32px;border:1px solid #c9c9c9;border-radius:4px;background:#fff"></div>
<div class="t" style="left:592px;top:492px;font-size:14px;color:#1f2329;">取消</div>
<div class="a" style="left:663px;top:483px;width:82px;height:32px;border-radius:4px;background:#0062ff"></div>
<div class="t" style="left:690px;top:492px;font-size:14px;color:#fff;">确定</div>
</div>
</body></html>
